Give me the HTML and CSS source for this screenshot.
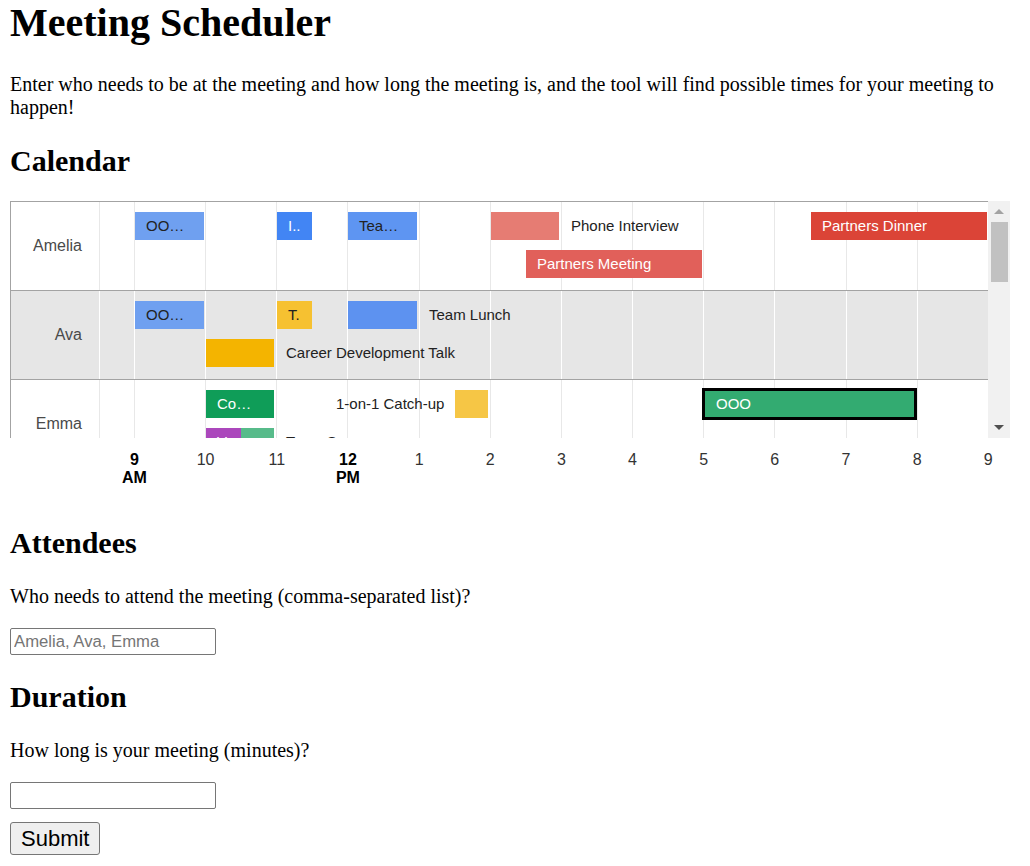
FILE: index.html
```html
<!DOCTYPE html>
<html lang="en">
<head>
<meta charset="utf-8">
<title>Meeting Scheduler</title>
<link rel="stylesheet" href="styles.css">
</head>
<body>
<h1 class="title">Meeting Scheduler</h1>
<p class="text">Enter who needs to be at the meeting and how long the meeting is, and the tool will find possible times for your meeting to happen!</p>

<h2 class="heading">Calendar</h2>
<div class="chart">
  <div class="chart-view">
    <div class="rows">
      <div class="row row-white">
        <div class="row-label">Amelia</div>
        <div class="track">
          <div class="grid"><span></span><span></span><span></span><span></span><span></span><span></span><span></span><span></span><span></span><span></span><span></span><span></span><span></span></div>
          <div class="bar c-blue-light dark" style="left:35px;top:10px;width:69px">OO…</div>
          <div class="bar c-blue" style="left:177px;top:10px;width:35px">I..</div>
          <div class="bar c-blue-mid dark" style="left:248px;top:10px;width:69px">Tea…</div>
          <div class="bar c-red-light" style="left:391px;top:10px;width:68px"></div>
          <div class="tag" style="left:471px;top:10px">Phone Interview</div>
          <div class="bar c-red" style="left:711px;top:10px;width:176px">Partners Dinner</div>
          <div class="bar c-red-mid" style="left:426px;top:48px;width:176px">Partners Meeting</div>
        </div>
      </div>
      <div class="row row-gray">
        <div class="row-label">Ava</div>
        <div class="track">
          <div class="grid"><span></span><span></span><span></span><span></span><span></span><span></span><span></span><span></span><span></span><span></span><span></span><span></span><span></span></div>
          <div class="bar c-blue-light dark" style="left:35px;top:10px;width:69px">OO…</div>
          <div class="bar c-yellow-mid dark" style="left:177px;top:10px;width:35px">T.</div>
          <div class="bar c-blue-mid2" style="left:248px;top:10px;width:69px"></div>
          <div class="tag" style="left:329px;top:10px">Team Lunch</div>
          <div class="bar c-yellow" style="left:106px;top:48px;width:68px"></div>
          <div class="tag" style="left:186px;top:48px">Career Development Talk</div>
        </div>
      </div>
      <div class="row row-white">
        <div class="row-label">Emma</div>
        <div class="track">
          <div class="grid"><span></span><span></span><span></span><span></span><span></span><span></span><span></span><span></span><span></span><span></span><span></span><span></span><span></span></div>
          <div class="bar c-green" style="left:106px;top:10px;width:68px">Co…</div>
          <div class="tag" style="left:236px;top:10px">1-on-1 Catch-up</div>
          <div class="bar c-yellow-light" style="left:355px;top:10px;width:33px"></div>
          <div class="bar c-green-light selected" style="left:602px;top:8px;width:215px">OOO</div>
          <div class="bar c-purple" style="left:106px;top:48px;width:35px">V..</div>
          <div class="bar c-teal" style="left:141px;top:48px;width:33px"></div>
          <div class="tag" style="left:186px;top:48px">Team Sync</div>
        </div>
      </div>
    </div>
    <div class="scrollbar">
      <div class="sb-btn"><span class="arrow-up"></span></div>
      <div class="sb-thumb"></div>
      <div class="sb-space"></div>
      <div class="sb-btn"><span class="arrow-down"></span></div>
    </div>
  </div>
  <div class="axis">
    <div class="tick strong" style="left:124.5px">9<br>AM</div>
    <div class="tick" style="left:195.6px">10</div>
    <div class="tick" style="left:266.8px">11</div>
    <div class="tick strong" style="left:337.9px">12<br>PM</div>
    <div class="tick" style="left:409.1px">1</div>
    <div class="tick" style="left:480.2px">2</div>
    <div class="tick" style="left:551.4px">3</div>
    <div class="tick" style="left:622.5px">4</div>
    <div class="tick" style="left:693.7px">5</div>
    <div class="tick" style="left:764.8px">6</div>
    <div class="tick" style="left:836px">7</div>
    <div class="tick" style="left:907.1px">8</div>
    <div class="tick" style="left:978.3px">9</div>
  </div>
</div>

<h2 class="heading">Attendees</h2>
<p class="text">Who needs to attend the meeting (comma-separated list)?</p>
<input class="field" type="text" placeholder="Amelia, Ava, Emma">

<h2 class="heading">Duration</h2>
<p class="text">How long is your meeting (minutes)?</p>
<input class="field" type="text">
<button class="submit" type="button">Submit</button>
</body>
</html>
```

FILE: styles.css
```css
html, body {
  background: #fff;
}

body {
  margin: 0 10px;
  font-family: "Liberation Serif", "Times New Roman", serif;
  color: #000;
}

.title {
  font-size: 40px;
  font-weight: bold;
  margin: -1px 0 26.8px;
}

.heading {
  font-size: 30px;
  font-weight: bold;
  margin: 24.9px 0;
}

.text {
  font-size: 20px;
  margin: 20px 0;
}

/* ---------- chart ---------- */
.chart {
  width: 1000px;
  height: 301px;
  margin-top: -2px;
  display: flex;
  flex-direction: column;
  font-family: "Liberation Sans", Arial, sans-serif;
  font-size: 16px;
}

.chart-view {
  display: flex;
  height: 237px;
}

.rows {
  width: 978px;
  height: 237px;
  box-sizing: border-box;
  border-top: 1px solid #a3a3a3;
  border-left: 1px solid #a3a3a3;
  overflow: hidden;
}

.row {
  display: flex;
  height: 88px;
  border-bottom: 1px solid #a3a3a3;
}

.row-white {
  background: #fff;
  --grid: #e8e8e8;
}

.row-gray {
  background: #e6e6e6;
  --grid: #ffffff;
}

.row-label {
  width: 71px;
  padding-right: 17px;
  border-right: 1px solid var(--grid);
  display: flex;
  align-items: center;
  justify-content: flex-end;
  color: #4a4a4a;
}

.track {
  flex: 1;
  position: relative;
}

.grid {
  display: grid;
  grid-template-columns: 34px repeat(12, 1fr);
  height: 100%;
}

.grid span {
  border-left: 1px solid var(--grid);
}

.grid span:first-child {
  border-left: none;
}

.bar {
  position: absolute;
  height: 28px;
  box-sizing: border-box;
  padding-left: 11px;
  line-height: 28px;
  font-size: 15px;
  color: #fff;
  white-space: nowrap;
  overflow: hidden;
}

.bar.dark {
  color: #222;
}

.bar.selected {
  height: 32px;
  border: 3px solid #000;
  line-height: 26px;
  padding-left: 11px;
}

.tag {
  position: absolute;
  line-height: 28px;
  font-size: 15px;
  color: #222;
  white-space: nowrap;
}

.c-blue-light { background: #6fa0f0; }
.c-blue { background: #4285f4; }
.c-blue-mid { background: #5e95f2; }
.c-blue-mid2 { background: #5d92f0; }
.c-red-light { background: #e67c73; }
.c-red { background: #db4437; }
.c-red-mid { background: #e1605a; }
.c-yellow { background: #f4b400; }
.c-yellow-mid { background: #f6c131; }
.c-yellow-light { background: #f6c645; }
.c-green { background: #0f9d58; }
.c-green-light { background: #33ab71; }
.c-purple { background: #ab47bc; }
.c-teal { background: #57bb8a; }

/* fake scrollbar */
.scrollbar {
  width: 22px;
  height: 237px;
  background: #f1f1f1;
  display: flex;
  flex-direction: column;
  align-items: center;
}

.sb-btn {
  height: 21px;
  width: 100%;
  display: flex;
  align-items: center;
  justify-content: center;
}

.arrow-up {
  width: 0;
  height: 0;
  border-left: 5px solid transparent;
  border-right: 5px solid transparent;
  border-bottom: 5px solid #a3a3a3;
}

.arrow-down {
  width: 0;
  height: 0;
  border-left: 5px solid transparent;
  border-right: 5px solid transparent;
  border-top: 5px solid #505050;
}

.sb-thumb {
  width: 17px;
  height: 60px;
  background: #c1c1c1;
}

.sb-space {
  flex: 1;
}

.axis {
  position: relative;
  height: 64px;
}

.tick {
  position: absolute;
  top: 13px;
  transform: translateX(-50%);
  text-align: center;
  color: #333;
  white-space: nowrap;
}

.tick.strong {
  font-weight: bold;
  color: #000;
}

/* ---------- form ---------- */
.field {
  display: block;
  width: 206px;
  height: 27px;
  box-sizing: border-box;
  margin: 0;
  padding: 0 3px;
  border: 1px solid #767676;
  border-radius: 2px;
  font-family: "Liberation Sans", Arial, sans-serif;
  font-size: 16.7px;
  color: #000;
  background: #fff;
}

.field::placeholder {
  color: #757575;
}

.submit {
  display: block;
  margin: 13px 0 0;
  height: 33px;
  box-sizing: border-box;
  padding: 0 10px;
  border: 1px solid #767676;
  border-radius: 3px;
  background: #efefef;
  font-family: "Liberation Sans", Arial, sans-serif;
  font-size: 22px;
  color: #000;
}
```
